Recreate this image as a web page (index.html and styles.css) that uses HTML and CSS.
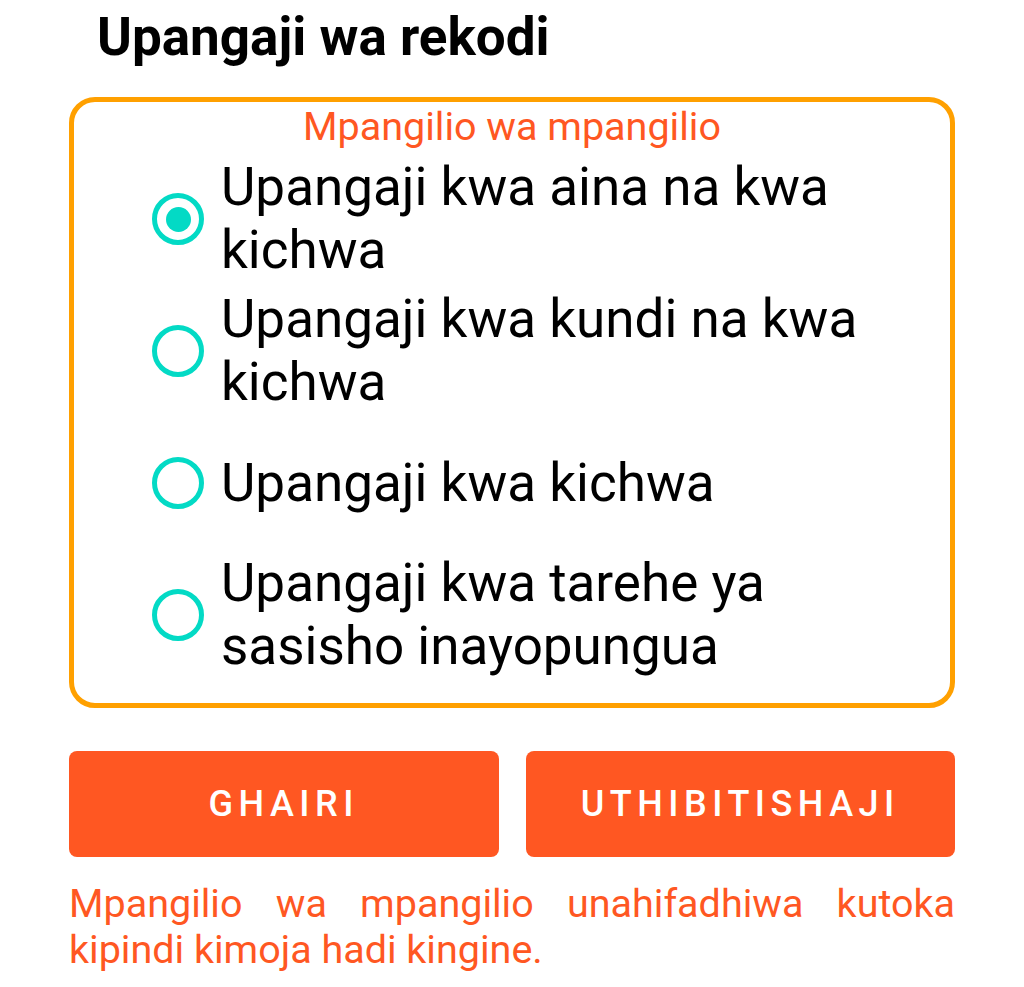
FILE: index.html
```html
<!DOCTYPE html>
<html lang="sw">
<head>
    <meta charset="UTF-8">
    <meta name="viewport" content="width=device-width, initial-scale=1.0">
    <title>Upangaji wa rekodi</title>
    <link rel="stylesheet" href="styles.css">
</head>
<body>
    <div class="dialog">
        <h1 class="dialog-title">Upangaji wa rekodi</h1>

        <div class="sort-box">
            <div class="sort-legend">Mpangilio wa mpangilio</div>
            <div class="sort-options">
                <label class="sort-option">
                    <span class="radio checked"></span>
                    <span class="option-text">Upangaji kwa aina na kwa kichwa</span>
                </label>
                <label class="sort-option">
                    <span class="radio"></span>
                    <span class="option-text">Upangaji kwa kundi na kwa kichwa</span>
                </label>
                <label class="sort-option">
                    <span class="radio"></span>
                    <span class="option-text">Upangaji kwa kichwa</span>
                </label>
                <label class="sort-option">
                    <span class="radio"></span>
                    <span class="option-text">Upangaji kwa tarehe ya sasisho inayopungua</span>
                </label>
            </div>
        </div>

        <div class="actions">
            <button class="btn" type="button">Ghairi</button>
            <button class="btn" type="button">Uthibitishaji</button>
        </div>

        <p class="note">Mpangilio wa mpangilio unahifadhiwa kutoka kipindi kimoja hadi kingine.</p>
    </div>
</body>
</html>
```

FILE: styles.css
```css
body {
    margin: 0;
    background-color: #fff;
    color: #000;
    font-family: 'Roboto', 'Noto Sans', sans-serif;
}

.dialog {
    padding: 6px 69px 0;
}

.dialog-title {
    margin: 0 0 29px 28px;
    font-size: 53px;
    font-weight: 700;
    line-height: 62px;
}

.sort-box {
    border: 5px solid #ffa000;
    border-radius: 26px;
    padding: 5px 0 22px;
}

.sort-legend {
    text-align: center;
    color: #ff5722;
    font-size: 39.5px;
    line-height: 40px;
    margin-bottom: 6px;
}

.sort-option {
    display: flex;
    align-items: center;
    gap: 17px;
    height: 132px;
    padding: 0 50px 0 78px;
    cursor: pointer;
}

.radio {
    flex: 0 0 auto;
    width: 42px;
    height: 42px;
    border: 5px solid #03dac5;
    border-radius: 50%;
    position: relative;
}

.radio.checked::after {
    content: '';
    position: absolute;
    top: 8.5px;
    left: 8.5px;
    width: 25px;
    height: 25px;
    border-radius: 50%;
    background-color: #03dac5;
}

.option-text {
    font-size: 53px;
    line-height: 63px;
}

.actions {
    display: flex;
    gap: 27px;
    margin-top: 43px;
}

.btn {
    flex: 1;
    height: 106px;
    border: none;
    border-radius: 8px;
    background-color: #ff5722;
    color: #fff;
    font-family: 'Roboto', sans-serif;
    font-weight: 500;
    font-size: 36px;
    letter-spacing: 5.5px;
    text-transform: uppercase;
    cursor: pointer;
}

.note {
    margin: 24px 0 0;
    color: #ff5722;
    font-size: 39.5px;
    line-height: 46px;
    text-align: justify;
}
```
